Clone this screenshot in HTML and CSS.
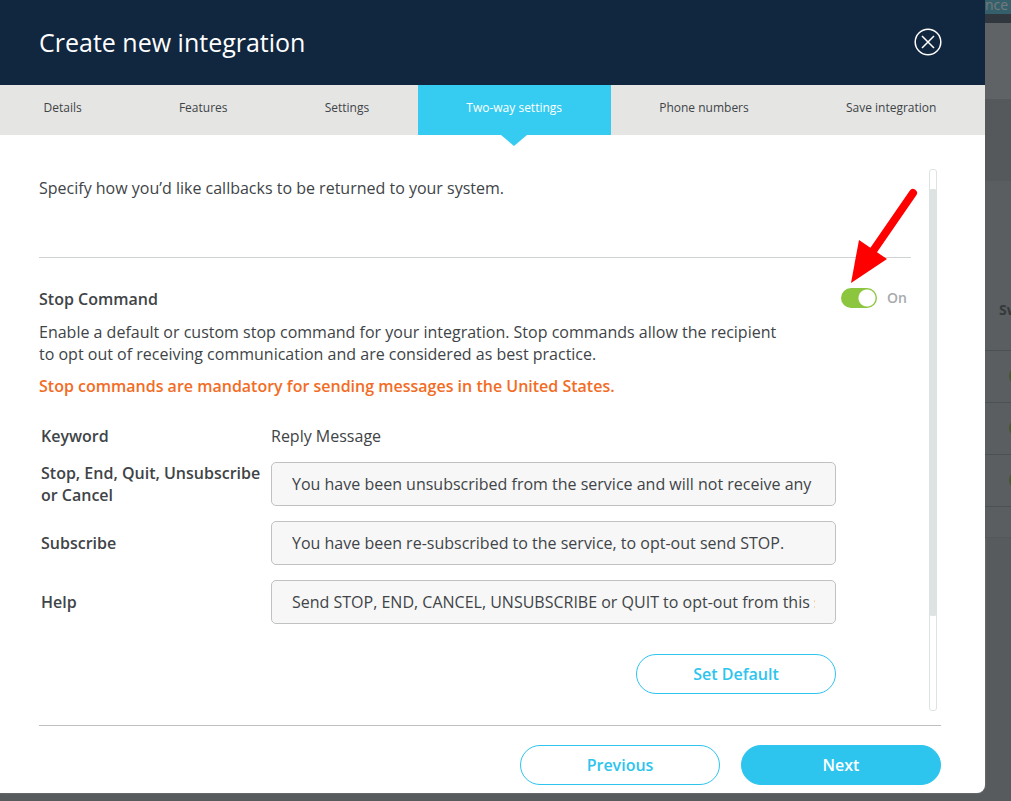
FILE: index.html
```
<!DOCTYPE html>
<html lang="en">
<head>
    <meta charset="UTF-8">
    <meta name="viewport" content="width=device-width, initial-scale=1.0">
    <title>Create new integration</title>
    <link rel="stylesheet" href="styles.css">
</head>
<body>
    <div class="modal">
        <header class="modal-header">
            <h1>Create new integration</h1>
            <button type="button" class="close" aria-label="Close">
                <svg width="28" height="28" viewBox="0 0 28 28" fill="none" stroke="#fff">
                    <circle cx="14" cy="14" r="12.8" stroke-width="1.5"/>
                    <path d="M8 8l12 12M20 8L8 20" stroke-width="1.5"/>
                </svg>
            </button>
        </header>

        <nav class="tabs">
            <a href="#details">Details</a>
            <a href="#features">Features</a>
            <a href="#settings">Settings</a>
            <a href="#two-way" class="active">Two-way settings</a>
            <a href="#numbers">Phone numbers</a>
            <a href="#save">Save integration</a>
        </nav>

        <main class="modal-body">
            <div class="scroll-area">
                <div class="content">
                    <p class="intro">Specify how you’d like callbacks to be returned to your system.</p>

                    <div class="stop-header">
                        <h2>Stop Command</h2>
                        <label class="switch">
                            <input type="checkbox" checked>
                            <span>On</span>
                            <svg class="arrow" width="72" height="102" viewBox="0 0 72 102">
                                <path d="M65 9L25 67" stroke="#f00" stroke-width="8" stroke-linecap="round"/>
                                <path d="M3 99L11 56L39 75z" fill="#f00"/>
                            </svg>
                        </label>
                    </div>
                    <p class="description">Enable a default or custom stop command for your integration. Stop commands allow the recipient to opt out of receiving communication and are considered as best practice.</p>
                    <p class="warning">Stop commands are mandatory for sending messages in the United States.</p>

                    <form class="replies">
                        <span class="keyword">Keyword</span>
                        <span>Reply Message</span>

                        <label class="keyword" for="stop">Stop, End, Quit, Unsubscribe or Cancel</label>
                        <input type="text" id="stop" value="You have been unsubscribed from the service and will not receive any">

                        <label class="keyword" for="subscribe">Subscribe</label>
                        <input type="text" id="subscribe" value="You have been re-subscribed to the service, to opt-out send STOP.">

                        <label class="keyword" for="help">Help</label>
                        <input type="text" id="help" value="Send STOP, END, CANCEL, UNSUBSCRIBE or QUIT to opt-out from this service.">

                        <button type="button" class="btn set-default">Set Default</button>
                    </form>
                </div>
                <div class="scrollbar">
                    <div class="thumb"></div>
                </div>
            </div>

            <footer class="modal-footer">
                <button type="button" class="btn">Previous</button>
                <button type="button" class="btn primary">Next</button>
            </footer>
        </main>
    </div>

    <!-- dimmed page behind the dialog -->
    <aside class="page-behind">
        <div class="top-button">nce</div>
        <div class="top-line"></div>
        <div class="band"></div>
        <div class="band dark"></div>
        <div class="table-head">Sw</div>
        <div class="row"><i></i></div>
        <div class="row"><i></i></div>
        <div class="row"><i></i></div>
        <div class="row last"></div>
    </aside>
</body>
</html>
```
FILE: styles.css
```
* {
    box-sizing: border-box;
}
body {
    margin: 0;
    min-height: 100vh;
    display: flex;
    align-items: flex-start;
    overflow: hidden;
    background-color: #575b5d;
    font-family: "Open Sans", "Noto Sans", sans-serif;
    font-size: 16px;
    line-height: 22px;
    color: #404447;
}
h1, h2, p {
    margin: 0;
}
button, input {
    font-family: inherit;
    font-size: 16px;
}

.modal {
    flex: 1;
    min-width: 0;
    background-color: #fff;
    border-radius: 0 0 8px 0;
    box-shadow: 0 0 2px #888;
}
.modal-header {
    display: flex;
    justify-content: space-between;
    align-items: center;
    height: 85px;
    padding: 0 43px 2px 39px;
    background-color: #11263f;
    color: #fff;
}
.modal-header h1 {
    font-size: 25px;
    font-weight: 400;
    line-height: 32px;
}
.close {
    display: flex;
    padding: 0;
    border: none;
    background: none;
    cursor: pointer;
}

.tabs {
    display: flex;
    height: 50px;
    background-color: #e5e5e4;
}
.tabs a {
    flex: 1 1 auto;
    padding: 12px 48px 0;
    text-align: center;
    font-size: 12px;
    color: #404447;
    text-decoration: none;
    white-space: nowrap;
}
.tabs a:first-child {
    padding-left: 43px;
}
.tabs a.active {
    position: relative;
    background-color: #36cbf0;
    color: #fff;
}
.tabs a.active::after {
    content: "";
    position: absolute;
    top: 100%;
    left: 50%;
    margin-left: -13px;
    border: 13px solid transparent;
    border-top: 11px solid #36cbf0;
    border-bottom: none;
}

.modal-body {
    padding: 34px 44px 8px 39px;
}
.scroll-area {
    display: flex;
    gap: 18px;
    padding-right: 4px;
    margin-bottom: 14px;
}
.content {
    flex: 1;
    min-width: 0;
    padding: 8px 0 17px;
}
.intro {
    padding-bottom: 58px;
    border-bottom: 1px solid #d0d3d4;
}
.stop-header {
    display: flex;
    justify-content: space-between;
    align-items: flex-start;
    margin-top: 30px;
    padding-right: 4px;
}
.stop-header h2 {
    font-size: 16px;
    line-height: 22px;
    font-weight: 600;
}
.switch {
    position: relative;
    display: flex;
    align-items: center;
    gap: 10px;
    font-size: 14px;
    line-height: 20px;
    font-weight: 600;
    color: #a8aaab;
}
.switch input {
    appearance: none;
    width: 36px;
    height: 20px;
    margin: 0;
    border-radius: 10px;
    background: radial-gradient(circle at 26px 10px, #fff 8px, #8cc63f 9px);
}
.arrow {
    position: absolute;
    right: -13px;
    bottom: 22px;
}
.description {
    max-width: 750px;
    margin-top: 11px;
}
.warning {
    margin-top: 10px;
    font-weight: 600;
    color: #f26c25;
}

.replies {
    display: grid;
    grid-template-columns: 220px minmax(0, 565px);
    column-gap: 10px;
    row-gap: 15px;
    padding-left: 2px;
    margin-top: 28px;
    align-items: center;
}
.keyword {
    font-weight: 600;
}
.replies input {
    width: 100%;
    height: 44px;
    padding: 0 20px;
    border: 1px solid #bfc1c2;
    border-radius: 5px;
    background-color: #f7f7f7;
    color: #404447;
}
.btn {
    width: 200px;
    height: 40px;
    border: 1px solid #2dc4ee;
    border-radius: 20px;
    background-color: #fff;
    font-weight: 600;
    color: #2dc4ee;
    cursor: pointer;
}
.btn.primary {
    background-color: #2dc4ee;
    color: #fff;
}
.set-default {
    grid-column: 2;
    justify-self: end;
    margin-top: 15px;
}

.scrollbar {
    width: 8px;
    padding-top: 19px;
    border: 1px solid #dde2e2;
    border-radius: 3px;
}
.thumb {
    height: 82%;
    margin: 0 -1px;
    border-radius: 3px;
    background-color: #dde2e2;
}
.modal-footer {
    display: flex;
    justify-content: flex-end;
    gap: 21px;
    padding-top: 19px;
    border-top: 1px solid #bdbfc0;
}

.page-behind {
    width: 26px;
    overflow: hidden;
    color: #35393c;
}
.top-button {
    height: 14px;
    background-color: #35606b;
    color: #747b7d;
    font-size: 14px;
    line-height: 9px;
}
.top-line {
    height: 9px;
    background-color: #30373f;
}
.band {
    height: 76px;
    background-color: #5f6365;
}
.band.dark {
    height: 82px;
    background-color: #56595c;
}
.table-head {
    height: 170px;
    padding: 118px 0 0 14px;
    border-bottom: 1px solid #4c5154;
    background-color: #5a5e60;
    font-size: 14px;
    font-weight: 700;
}
.row {
    height: 52px;
    padding: 16px 0 0 24px;
    border-bottom: 1px solid #4c5154;
    background-color: #5a5e60;
}
.row i {
    display: block;
    width: 36px;
    height: 18px;
    border-radius: 9px;
    background-color: #43582f;
}
.row.last {
    height: 31px;
    border-bottom-color: #54585a;
}
```
